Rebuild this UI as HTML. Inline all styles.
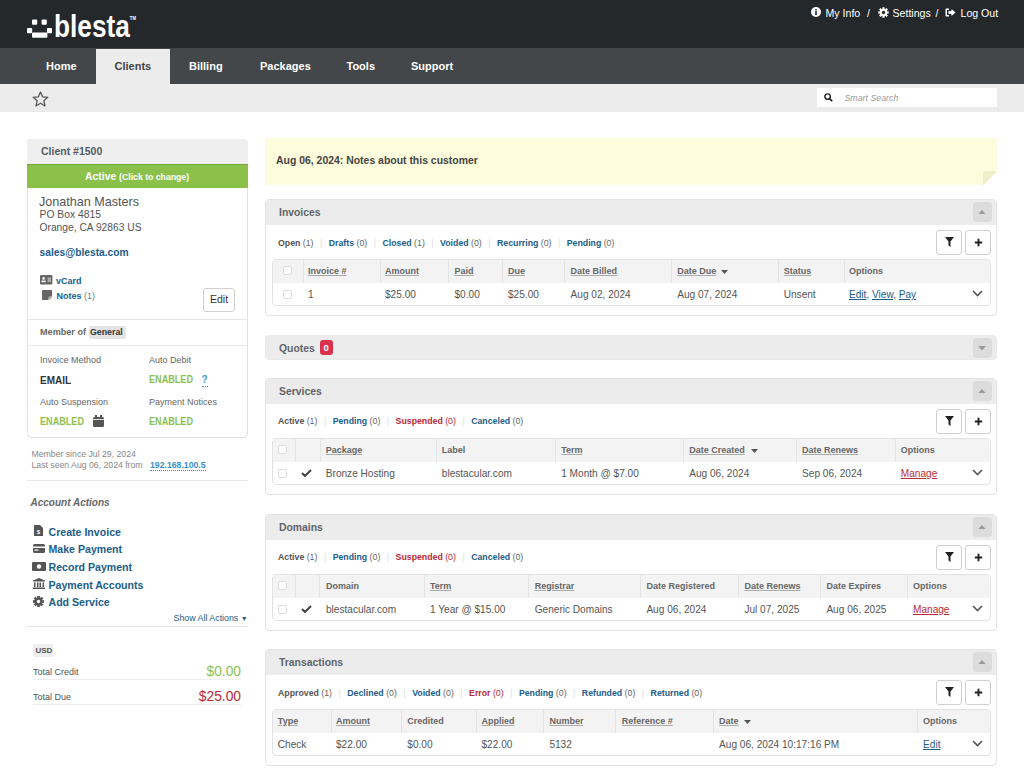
<!DOCTYPE html>
<html><head><meta charset="utf-8">
<style>
*{margin:0;padding:0;box-sizing:border-box}
html,body{width:1024px;height:777px;overflow:hidden;background:#fff;font-family:"Liberation Sans", sans-serif;color:#555}
.abs{position:absolute}
.t{position:absolute;white-space:nowrap;line-height:1}
#hdr{position:absolute;left:0;top:0;width:1024px;height:48px;background:#25282b}
#nav{position:absolute;left:0;top:48px;width:1024px;height:36px;background:#43474a}
#sub{position:absolute;left:0;top:84px;width:1024px;height:28px;background:#ececec}
.nav{position:absolute;top:0;height:36px;color:#fff;font-weight:bold;font-size:11px}
.nav span{position:absolute;top:13px;white-space:nowrap}
.panel{position:absolute;left:265px;width:732px;border:1px solid #e3e3e3;border-radius:4px;background:#fff}
.phead{position:absolute;left:0;top:0;right:0;height:24.5px;background:#ececec;border-radius:3px 3px 0 0}
.ptitle{position:absolute;left:13px;top:7.5px;font-weight:bold;font-size:10.4px;color:#5f656b;white-space:nowrap;line-height:1}
.coll{position:absolute;right:4px;top:2px;width:19.5px;height:19.5px;background:#dcdcdc;border-radius:3px}
.filt{position:absolute;left:12px;top:38.2px;font-size:8.75px;white-space:nowrap;line-height:1;color:#666}
.filt b{color:#1b5d8b}
.filt b.cur{color:#555}
.filt b.red{color:#bc2a35}
.filt .red2{color:#bc2a35}
.filt i{font-style:normal;color:#ddd;padding:0 6.5px}
.btn{position:absolute;top:30px;width:26px;height:24.5px;border:1px solid #cfcfcf;border-radius:3px;background:#fff}
.tbl{position:absolute;left:6px;top:59px;width:719px;height:46.5px;border:1px solid #e2e2e2;border-radius:4px;overflow:hidden}
.thr{position:absolute;left:0;top:0;right:0;height:23px;background:#f3f3f3}
.vd{position:absolute;top:0;width:1px;height:23px;background:#e4e4e4}
.th{position:absolute;top:6.7px;font-weight:bold;font-size:9px;color:#666;white-space:nowrap;line-height:1}
.th.u{text-decoration:underline;text-decoration-color:#aaa}
.td{position:absolute;top:29.5px;font-size:10.1px;color:#555;white-space:nowrap;line-height:1}
.cb{position:absolute;width:9.5px;height:9.5px;border:1px solid #dcdcdc;border-radius:2px;background:#fff}
a{color:#1b5d8b;text-decoration:underline}
</style></head><body>
<div id="hdr"></div><svg class="abs" style="left:0;top:0" width="160" height="48">
<g fill="#fff">
<rect x="32" y="19.6" width="5.2" height="5.2" rx="1"/>
<rect x="41.6" y="19.6" width="5.2" height="5.2" rx="1"/>
<rect x="27" y="28" width="5.2" height="5.2" rx="1"/>
<rect x="47" y="28" width="5" height="5.2" rx="1"/>
<rect x="32" y="32.4" width="15.4" height="5.4" rx="1"/>
</g>
<text x="54" y="37.4" fill="#fff" font-family="Liberation Sans" font-weight="bold" font-size="32" transform="translate(54,0) scale(0.82,1) translate(-54,0)">blesta</text>
<text x="129.8" y="20.5" fill="#fff" font-family="Liberation Sans" font-weight="bold" font-size="5" transform="translate(129.8,0) scale(0.85,1) translate(-129.8,0)">TM</text>
</svg><div class="t" style="left:811px;top:7px;font-size:10.6px;color:#fff">
<svg width="10" height="10" style="vertical-align:-1px" viewBox="0 0 10 10"><circle cx="5" cy="5" r="5" fill="#fff"/><rect x="4.2" y="4" width="1.6" height="4" fill="#25282b"/><circle cx="5" cy="2.6" r="0.9" fill="#25282b"/></svg>
</div><div class="t" style="left:825.5px;top:7.5px;font-size:10.6px;color:#fff">My Info</div><div class="t" style="left:867px;top:7.5px;font-size:10.6px;color:#fff">/</div><svg class="abs" style="left:878px;top:7px" width="11" height="11" viewBox="0 0 20 20"><g fill="#fff"><circle cx="10" cy="10" r="6.5"/><g id="tooth"><rect x="8" y="0.5" width="4" height="4.5"/></g><use href="#tooth" transform="rotate(45 10 10)"/><use href="#tooth" transform="rotate(90 10 10)"/><use href="#tooth" transform="rotate(135 10 10)"/><use href="#tooth" transform="rotate(180 10 10)"/><use href="#tooth" transform="rotate(225 10 10)"/><use href="#tooth" transform="rotate(270 10 10)"/><use href="#tooth" transform="rotate(315 10 10)"/></g><circle cx="10" cy="10" r="3" fill="#25282b"/></svg><div class="t" style="left:892.5px;top:7.5px;font-size:10.6px;color:#fff">Settings</div><div class="t" style="left:935.5px;top:7.5px;font-size:10.6px;color:#fff">/</div><svg class="abs" style="left:945px;top:8px" width="11" height="9" viewBox="0 0 22 18"><path d="M8 1H3Q1 1 1 3V15Q1 17 3 17H8V14H4V4H8Z" fill="#fff"/><path d="M13 2L21 9L13 16V12H7V6H13Z" fill="#fff"/></svg><div class="t" style="left:960.5px;top:7.5px;font-size:10.6px;color:#fff">Log Out</div><div id="nav"><div class="abs" style="left:96px;top:1px;width:74px;height:35px;background:#ececec"></div><div class="t" style="left:46px;top:13px;font-size:11px;font-weight:bold;color:#fff">Home</div><div class="t" style="left:114.5px;top:13px;font-size:11px;font-weight:bold;color:#444">Clients</div><div class="t" style="left:189px;top:13px;font-size:11px;font-weight:bold;color:#fff">Billing</div><div class="t" style="left:260px;top:13px;font-size:11px;font-weight:bold;color:#fff">Packages</div><div class="t" style="left:346.5px;top:13px;font-size:11px;font-weight:bold;color:#fff">Tools</div><div class="t" style="left:411px;top:13px;font-size:11px;font-weight:bold;color:#fff">Support</div></div><div id="sub"><svg class="abs" style="left:32px;top:7px" width="17" height="16" viewBox="0 0 24 23"><path d="M12 1.5L15 8.3L22.5 9L16.8 14L18.5 21.5L12 17.6L5.5 21.5L7.2 14L1.5 9L9 8.3Z" fill="none" stroke="#555" stroke-width="1.8" stroke-linejoin="round"/></svg><div class="abs" style="left:817px;top:4px;width:180px;height:18.5px;background:#fff"></div><svg class="abs" style="left:824px;top:9px" width="9" height="9" viewBox="0 0 10 10"><circle cx="4" cy="4" r="3" fill="none" stroke="#222" stroke-width="1.6"/><path d="M6.2 6.2L9 9" stroke="#222" stroke-width="2"/></svg><div class="t" style="left:844.5px;top:10px;font-size:8.8px;font-style:italic;color:#999">Smart Search</div></div><div class="abs" style="left:27px;top:139px;width:221px;height:299px;border:1px solid #e2e2e2;border-radius:4px;background:#fff"></div><div class="abs" style="left:27px;top:139px;width:221px;height:25px;background:#efefef;border-radius:4px 4px 0 0"></div><div class="t" style="left:41px;top:146.4px;font-size:10.5px;font-weight:bold;color:#555c63">Client #1500</div><div class="abs" style="left:27px;top:164px;width:221px;height:24px;background:#8bc14b;border-top:1px solid #74a83b"></div><div class="t" style="left:85px;top:172px;font-size:10.4px;font-weight:bold;color:#fff">Active <span style="font-size:8.7px">(Click to change)</span></div><div class="t" style="left:39px;top:196px;font-size:12.6px;color:#555">Jonathan Masters</div><div class="t" style="left:39.5px;top:209.5px;font-size:10.35px;color:#555">PO Box 4815</div><div class="t" style="left:39.5px;top:222.5px;font-size:10.25px;color:#555">Orange, CA 92863 US</div><div class="t" style="left:39.5px;top:248px;font-size:10.25px;font-weight:bold;color:#1b5d8b">sales@blesta.com</div><svg class="abs" style="left:40.3px;top:275.2px" width="12.4" height="9.6" viewBox="0 0 12.4 9.6"><rect x="0" y="0" width="12.4" height="9.6" rx="1.3" fill="#666"/><circle cx="3.6" cy="3.4" r="1.3" fill="#fff"/><rect x="1.5" y="5.6" width="4.2" height="1.6" fill="#fff"/><rect x="7.6" y="2.4" width="3.4" height="4.6" fill="#aaa"/></svg><div class="t" style="left:56px;top:276.5px;font-size:9px;font-weight:bold;color:#1b5d8b">vCard</div><svg class="abs" style="left:41.7px;top:289.6px" width="10" height="10" viewBox="0 0 10 10"><path d="M0.8 0H9.2Q10 0 10 0.8V7L7 10H0.8Q0 10 0 9.2V0.8Q0 0 0.8 0Z" fill="#666"/><path d="M7 10V7.6Q7 7 7.6 7H10" fill="none" stroke="#fff" stroke-width="0.8"/></svg><div class="t" style="left:56.5px;top:292px;font-size:9px;font-weight:bold;color:#1b5d8b">Notes <span style="font-weight:normal;color:#777">(1)</span></div><div class="abs" style="left:203px;top:288px;width:32px;height:24px;border:1px solid #d0d0d0;border-radius:3px;background:#fff"></div><div class="t" style="left:210px;top:294px;font-size:10.5px;color:#333">Edit</div><div class="abs" style="left:28px;top:319px;width:219px;height:1px;background:#e6e6e6"></div><div class="t" style="left:40px;top:328px;font-size:9.1px;font-weight:bold;color:#666">Member of</div><div class="abs" style="left:88.5px;top:326px;width:37px;height:13px;background:#e4e4e4;border-radius:2px"></div><div class="t" style="left:90px;top:328px;font-size:8.8px;font-weight:bold;color:#333">General</div><div class="abs" style="left:28px;top:345px;width:219px;height:1px;background:#e6e6e6"></div><div class="t" style="left:40px;top:355.5px;font-size:9px;color:#666">Invoice Method</div><div class="t" style="left:149px;top:355.5px;font-size:9px;color:#666">Auto Debit</div><div class="t" style="left:40px;top:397.5px;font-size:9px;color:#666">Auto Suspension</div><div class="t" style="left:149px;top:397.5px;font-size:9px;color:#666">Payment Notices</div><div class="t" style="left:40px;top:375.5px;font-size:10px;font-weight:bold;color:#333">EMAIL</div><div class="t" style="left:149px;top:375.3px;font-size:10.4px;font-weight:bold;color:#8cc152;transform:scaleX(0.875);transform-origin:0 0">ENABLED</div><div class="t" style="left:40px;top:417.3px;font-size:10.4px;font-weight:bold;color:#8cc152;transform:scaleX(0.875);transform-origin:0 0">ENABLED</div><div class="t" style="left:149px;top:417.3px;font-size:10.4px;font-weight:bold;color:#8cc152;transform:scaleX(0.875);transform-origin:0 0">ENABLED</div><div class="t" style="left:201.5px;top:375px;font-size:10px;font-weight:bold;color:#3c9bd6;border-bottom:1px dotted #3c9bd6;padding-bottom:1px">?</div><svg class="abs" style="left:93px;top:415px" width="11" height="12" viewBox="0 0 11 12"><rect x="0" y="2" width="11" height="10" rx="1.5" fill="#555"/><rect x="2" y="0" width="2" height="3" fill="#555"/><rect x="7" y="0" width="2" height="3" fill="#555"/><rect x="0" y="4" width="11" height="0.8" fill="#fff"/></svg><div class="t" style="left:31.5px;top:450px;font-size:8.7px;color:#888">Member since Jul 29, 2024</div><div class="t" style="left:31.5px;top:461px;font-size:8.7px;color:#888">Last seen Aug 06, 2024 from</div><div class="t" style="left:150px;top:460.5px;font-size:8.7px;font-weight:bold;color:#3a8fc9;border-bottom:1px dotted #3a8fc9;padding-bottom:1px">192.168.100.5</div><div class="abs" style="left:27px;top:480px;width:221px;height:1px;background:#e8e8e8"></div><div class="t" style="left:30.5px;top:497.5px;font-size:10px;font-weight:bold;font-style:italic;color:#666">Account Actions</div><div class="t" style="left:48.5px;top:526.5px;font-size:10.6px;font-weight:bold;color:#1b5d8b">Create Invoice</div><div class="t" style="left:48.5px;top:544.1px;font-size:10.6px;font-weight:bold;color:#1b5d8b">Make Payment</div><div class="t" style="left:48.5px;top:561.7px;font-size:10.6px;font-weight:bold;color:#1b5d8b">Record Payment</div><div class="t" style="left:48.5px;top:579.5px;font-size:10.6px;font-weight:bold;color:#1b5d8b">Payment Accounts</div><div class="t" style="left:48.5px;top:597.2px;font-size:10.6px;font-weight:bold;color:#1b5d8b">Add Service</div><svg class="abs" style="left:34px;top:525px" width="9" height="11" viewBox="0 0 9 11"><path d="M0 0H6L9 3V11H0Z" fill="#555"/><text x="4.5" y="9" font-size="6" font-weight="bold" fill="#fff" text-anchor="middle" font-family="Liberation Sans">$</text></svg><svg class="abs" style="left:33px;top:544px" width="12" height="9" viewBox="0 0 12 9"><rect x="0" y="0" width="12" height="9" rx="1.5" fill="#555"/><rect x="0" y="2.5" width="12" height="1.5" fill="#fff"/><rect x="1.5" y="5.5" width="4" height="1.2" fill="#fff"/></svg><svg class="abs" style="left:32px;top:562px" width="14" height="9" viewBox="0 0 14 9"><rect x="0" y="0" width="14" height="9" rx="1" fill="#555"/><circle cx="7" cy="4.5" r="2.2" fill="#fff"/></svg><svg class="abs" style="left:33px;top:578px" width="12" height="11" viewBox="0 0 12 11"><path d="M6 0L12 2.5V3.5H0V2.5Z" fill="#555"/><rect x="1" y="4.5" width="1.5" height="4.5" fill="#555"/><rect x="4" y="4.5" width="1.5" height="4.5" fill="#555"/><rect x="6.5" y="4.5" width="1.5" height="4.5" fill="#555"/><rect x="9.5" y="4.5" width="1.5" height="4.5" fill="#555"/><rect x="0" y="9.5" width="12" height="1.5" fill="#555"/></svg><svg class="abs" style="left:33px;top:596px" width="11" height="11" viewBox="0 0 20 20"><g fill="#555"><circle cx="10" cy="10" r="6.5"/><g id="tooth2"><rect x="7.5" y="0" width="5" height="5"/></g><use href="#tooth2" transform="rotate(45 10 10)"/><use href="#tooth2" transform="rotate(90 10 10)"/><use href="#tooth2" transform="rotate(135 10 10)"/><use href="#tooth2" transform="rotate(180 10 10)"/><use href="#tooth2" transform="rotate(225 10 10)"/><use href="#tooth2" transform="rotate(270 10 10)"/><use href="#tooth2" transform="rotate(315 10 10)"/></g><circle cx="10" cy="10" r="3" fill="#fff"/></svg><div class="t" style="left:173.5px;top:613.5px;font-size:8.84px;color:#1b5d8b">Show All Actions <span style="font-size:7px">&#9660;</span></div><div class="abs" style="left:27px;top:625.5px;width:221px;height:1px;background:#e3e8ec"></div><div class="abs" style="left:33px;top:644px;width:20px;height:13px;background:#eee;border-radius:2px"></div><div class="t" style="left:35.5px;top:647px;font-size:8px;font-weight:bold;color:#555">USD</div><div class="t" style="left:33px;top:668px;font-size:9px;color:#555">Total Credit</div><div class="t" style="right:783px;top:665px;font-size:13.8px;color:#8cc152">$0.00</div><div class="abs" style="left:33px;top:679px;width:208px;height:1px;background:#eee"></div><div class="t" style="left:33px;top:693px;font-size:9px;color:#555">Total Due</div><div class="t" style="right:783px;top:690px;font-size:13.8px;color:#bc2a35">$25.00</div><div class="abs" style="left:33px;top:704px;width:208px;height:1px;background:#eee"></div><div class="abs" style="left:265px;top:138px;width:732px;height:47.3px;background:#fdfcdc;clip-path:polygon(0 0,100% 0,100% 33px,718px 47.3px,0 47.3px)"></div><svg class="abs" style="left:983px;top:171px" width="14" height="15" viewBox="0 0 14 15"><path d="M0 14.5L0 2Q0 0 2 0L14 0Z" fill="#f1efc9"/><path d="M0 15L14 0.5" stroke="#f3f3f3" stroke-width="1"/></svg><div class="t" style="left:276px;top:155.5px;font-size:10.44px;font-weight:bold;color:#444">Aug 06, 2024: Notes about this customer</div><div class="panel" style="top:199.4px;height:116.5px"><div class="phead"></div><div class="ptitle">Invoices</div><div class="coll"><svg class="abs" style="left:5.5px;top:7.5px" width="8" height="4.5" viewBox="0 0 8 4.5"><path d="M0 4.5H8L4 0Z" fill="#999"/></svg></div><div class="filt"><b class="cur">Open</b> (1)<i>|</i><b class="">Drafts</b> (0)<i>|</i><b class="">Closed</b> (1)<i>|</i><b class="">Voided</b> (0)<i>|</i><b class="">Recurring</b> (0)<i>|</i><b class="">Pending</b> (0)</div><div class="btn" style="left:670px"><svg class="abs" style="left:7.5px;top:6px" width="9" height="10" viewBox="0 0 9 10"><path d="M0 0H9L5.5 4.5V10L3.5 8.5V4.5Z" fill="#222"/></svg></div><div class="btn" style="left:699px"><svg class="abs" style="left:7.5px;top:6.5px" width="9" height="9" viewBox="0 0 9 9"><path d="M4.5 0.8V8.2M0.8 4.5H8.2" stroke="#222" stroke-width="1.9"/></svg></div><div class="tbl"><div class="thr"></div><div class="vd" style="left:29.5px"></div><div class="th u" style="left:35.0px">Invoice #</div><div class="vd" style="left:106.6px"></div><div class="th u" style="left:112.0px">Amount</div><div class="vd" style="left:175.4px"></div><div class="th u" style="left:181.5px">Paid</div><div class="vd" style="left:228.5px"></div><div class="th u" style="left:235.0px">Due</div><div class="vd" style="left:291.2px"></div><div class="th u" style="left:297.6px">Date Billed</div><div class="vd" style="left:398.3px"></div><div class="th u" style="left:404.2px">Date Due</div><svg class="abs" style="left:448px;top:10px" width="7" height="4" viewBox="0 0 7 4"><path d="M0 0H7L3.5 4Z" fill="#555"/></svg><div class="vd" style="left:504.6px"></div><div class="th u" style="left:510.7px">Status</div><div class="vd" style="left:570.6px"></div><div class="th" style="left:576.0px">Options</div><div class="td" style="left:35.0px">1</div><div class="td" style="left:112.0px">$25.00</div><div class="td" style="left:181.5px">$0.00</div><div class="td" style="left:235.0px">$25.00</div><div class="td" style="left:297.6px">Aug 02, 2024</div><div class="td" style="left:404.2px">Aug 07, 2024</div><div class="td" style="left:510.7px">Unsent</div><div class="td" style="left:576.0px"><a>Edit</a>, <a>View</a>, <a>Pay</a></div><div class="cb" style="left:9.5px;top:5.5px"></div><div class="cb" style="left:9.5px;top:29.5px"></div><svg class="abs" style="left:699px;top:30px" width="11" height="7" viewBox="0 0 11 7"><path d="M1 1L5.5 5.5L10 1" fill="none" stroke="#555" stroke-width="1.6"/></svg></div></div><div class="panel" style="top:335px;height:25px;border:1px solid #e9e9e9;background:#ececec;border-radius:4px"><div class="ptitle" style="left:13px;top:7.5px">Quotes</div><div class="abs" style="left:54px;top:4px;width:13px;height:15px;background:#d8334a;border-radius:3px"></div><div class="t" style="left:57.5px;top:7px;font-size:9.5px;font-weight:bold;color:#fff">0</div><div class="coll"><svg class="abs" style="left:5.5px;top:7.5px" width="8" height="4.5" viewBox="0 0 8 4.5"><path d="M0 0H8L4 4.5Z" fill="#999"/></svg></div></div><div class="panel" style="top:378px;height:116.5px"><div class="phead"></div><div class="ptitle">Services</div><div class="coll"><svg class="abs" style="left:5.5px;top:7.5px" width="8" height="4.5" viewBox="0 0 8 4.5"><path d="M0 4.5H8L4 0Z" fill="#999"/></svg></div><div class="filt"><b class="cur">Active</b> (1)<i>|</i><b class="">Pending</b> (0)<i>|</i><b class="red">Suspended</b> <span class="red2">(0)</span><i>|</i><b class="">Canceled</b> (0)</div><div class="btn" style="left:670px"><svg class="abs" style="left:7.5px;top:6px" width="9" height="10" viewBox="0 0 9 10"><path d="M0 0H9L5.5 4.5V10L3.5 8.5V4.5Z" fill="#222"/></svg></div><div class="btn" style="left:699px"><svg class="abs" style="left:7.5px;top:6.5px" width="9" height="9" viewBox="0 0 9 9"><path d="M4.5 0.8V8.2M0.8 4.5H8.2" stroke="#222" stroke-width="1.9"/></svg></div><div class="tbl"><div class="thr"></div><div class="vd" style="left:22.4px"></div><div class="vd" style="left:46.5px"></div><div class="th u" style="left:52.8px">Package</div><div class="vd" style="left:162.5px"></div><div class="th" style="left:168.8px">Label</div><div class="vd" style="left:282.2px"></div><div class="th u" style="left:288.2px">Term</div><div class="vd" style="left:409.8px"></div><div class="th u" style="left:416.2px">Date Created</div><svg class="abs" style="left:477.5px;top:10px" width="7" height="4" viewBox="0 0 7 4"><path d="M0 0H7L3.5 4Z" fill="#555"/></svg><div class="vd" style="left:523.2px"></div><div class="th u" style="left:529.1px">Date Renews</div><div class="vd" style="left:621.8px"></div><div class="th" style="left:627.8px">Options</div><div class="td" style="left:28.0px"><svg width="11" height="8" viewBox="0 0 11 8" style="vertical-align:0"><path d="M1 4L4 7L10 1" fill="none" stroke="#444" stroke-width="2"/></svg></div><div class="td" style="left:52.8px">Bronze Hosting</div><div class="td" style="left:168.8px">blestacular.com</div><div class="td" style="left:288.2px">1 Month @ $7.00</div><div class="td" style="left:416.2px">Aug 06, 2024</div><div class="td" style="left:529.1px">Sep 06, 2024</div><div class="td" style="left:627.8px"><a style="color:#bc2a35">Manage</a></div><div class="cb" style="left:4.5px;top:5.5px"></div><div class="cb" style="left:4.5px;top:29.5px"></div><svg class="abs" style="left:699px;top:30px" width="11" height="7" viewBox="0 0 11 7"><path d="M1 1L5.5 5.5L10 1" fill="none" stroke="#555" stroke-width="1.6"/></svg></div></div><div class="panel" style="top:514.2px;height:116.5px"><div class="phead"></div><div class="ptitle">Domains</div><div class="coll"><svg class="abs" style="left:5.5px;top:7.5px" width="8" height="4.5" viewBox="0 0 8 4.5"><path d="M0 4.5H8L4 0Z" fill="#999"/></svg></div><div class="filt"><b class="cur">Active</b> (1)<i>|</i><b class="">Pending</b> (0)<i>|</i><b class="red">Suspended</b> <span class="red2">(0)</span><i>|</i><b class="">Canceled</b> (0)</div><div class="btn" style="left:670px"><svg class="abs" style="left:7.5px;top:6px" width="9" height="10" viewBox="0 0 9 10"><path d="M0 0H9L5.5 4.5V10L3.5 8.5V4.5Z" fill="#222"/></svg></div><div class="btn" style="left:699px"><svg class="abs" style="left:7.5px;top:6.5px" width="9" height="9" viewBox="0 0 9 9"><path d="M4.5 0.8V8.2M0.8 4.5H8.2" stroke="#222" stroke-width="1.9"/></svg></div><div class="tbl"><div class="thr"></div><div class="vd" style="left:22.3px"></div><div class="vd" style="left:46.4px"></div><div class="th" style="left:53.0px">Domain</div><div class="vd" style="left:151.4px"></div><div class="th u" style="left:157.0px">Term</div><div class="vd" style="left:255.4px"></div><div class="th u" style="left:261.7px">Registrar</div><div class="vd" style="left:367.0px"></div><div class="th" style="left:373.4px">Date Registered</div><div class="vd" style="left:465.3px"></div><div class="th u" style="left:471.4px">Date Renews</div><div class="vd" style="left:547.0px"></div><div class="th" style="left:553.4px">Date Expires</div><div class="vd" style="left:634.3px"></div><div class="th" style="left:640.0px">Options</div><div class="td" style="left:28.0px"><svg width="11" height="8" viewBox="0 0 11 8" style="vertical-align:0"><path d="M1 4L4 7L10 1" fill="none" stroke="#444" stroke-width="2"/></svg></div><div class="td" style="left:53.0px">blestacular.com</div><div class="td" style="left:157.0px">1 Year @ $15.00</div><div class="td" style="left:261.7px">Generic Domains</div><div class="td" style="left:373.4px">Aug 06, 2024</div><div class="td" style="left:471.4px">Jul 07, 2025</div><div class="td" style="left:553.4px">Aug 06, 2025</div><div class="td" style="left:640.0px"><a style="color:#bc2a35">Manage</a></div><div class="cb" style="left:4.5px;top:5.5px"></div><div class="cb" style="left:4.5px;top:29.5px"></div><svg class="abs" style="left:699px;top:30px" width="11" height="7" viewBox="0 0 11 7"><path d="M1 1L5.5 5.5L10 1" fill="none" stroke="#555" stroke-width="1.6"/></svg></div></div><div class="panel" style="top:649.4px;height:117px"><div class="phead"></div><div class="ptitle">Transactions</div><div class="coll"><svg class="abs" style="left:5.5px;top:7.5px" width="8" height="4.5" viewBox="0 0 8 4.5"><path d="M0 4.5H8L4 0Z" fill="#999"/></svg></div><div class="filt"><b class="cur">Approved</b> (1)<i>|</i><b class="">Declined</b> (0)<i>|</i><b class="">Voided</b> (0)<i>|</i><b class="red">Error</b> <span class="red2">(0)</span><i>|</i><b class="">Pending</b> (0)<i>|</i><b class="">Refunded</b> (0)<i>|</i><b class="">Returned</b> (0)</div><div class="btn" style="left:670px"><svg class="abs" style="left:7.5px;top:6px" width="9" height="10" viewBox="0 0 9 10"><path d="M0 0H9L5.5 4.5V10L3.5 8.5V4.5Z" fill="#222"/></svg></div><div class="btn" style="left:699px"><svg class="abs" style="left:7.5px;top:6.5px" width="9" height="9" viewBox="0 0 9 9"><path d="M4.5 0.8V8.2M0.8 4.5H8.2" stroke="#222" stroke-width="1.9"/></svg></div><div class="tbl"><div class="thr"></div><div class="th u" style="left:4.8px">Type</div><div class="vd" style="left:57.5px"></div><div class="th u" style="left:63.0px">Amount</div><div class="vd" style="left:128.0px"></div><div class="th" style="left:134.3px">Credited</div><div class="vd" style="left:202.6px"></div><div class="th u" style="left:208.5px">Applied</div><div class="vd" style="left:270.1px"></div><div class="th u" style="left:276.4px">Number</div><div class="vd" style="left:342.1px"></div><div class="th u" style="left:348.8px">Reference #</div><div class="vd" style="left:440.1px"></div><div class="th u" style="left:446.1px">Date</div><svg class="abs" style="left:471px;top:10px" width="7" height="4" viewBox="0 0 7 4"><path d="M0 0H7L3.5 4Z" fill="#555"/></svg><div class="vd" style="left:643.7px"></div><div class="th" style="left:650.1px">Options</div><div class="td" style="left:4.8px">Check</div><div class="td" style="left:63.0px">$22.00</div><div class="td" style="left:134.3px">$0.00</div><div class="td" style="left:208.5px">$22.00</div><div class="td" style="left:276.4px">5132</div><div class="td" style="left:446.1px">Aug 06, 2024 10:17:16 PM</div><div class="td" style="left:650.1px"><a>Edit</a></div><svg class="abs" style="left:699px;top:30px" width="11" height="7" viewBox="0 0 11 7"><path d="M1 1L5.5 5.5L10 1" fill="none" stroke="#555" stroke-width="1.6"/></svg></div></div></body></html>
